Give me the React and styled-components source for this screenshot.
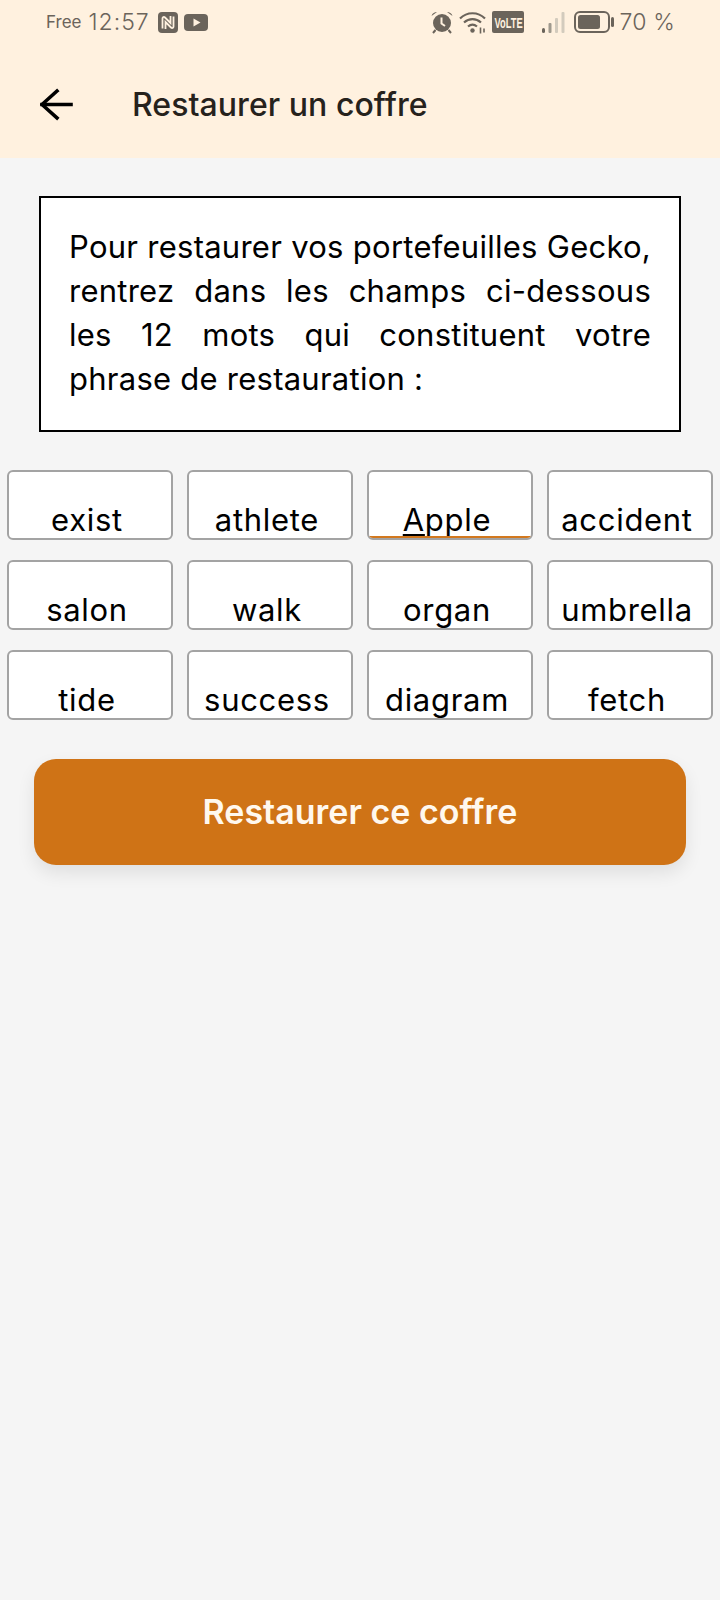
import React from "react";
import styled, { createGlobalStyle } from "styled-components";

const GlobalStyle = createGlobalStyle`
    html, body {
        margin: 0;
        padding: 0;
        background: #f5f5f5;
        font-family: Inter, "Noto Sans", sans-serif;
    }
`;

const Page = styled.div`
    width: 720px;
    height: 1600px;
    display: flex;
    flex-direction: column;
    background: #f5f5f5;
    overflow: hidden;
`;

const Header = styled.header`
    height: 158px;
    display: flex;
    flex-direction: column;
    background: #fff1df;
`;

const StatusBar = styled.div`
    height: 44px;
    padding: 0 45px 0 46px;
    display: flex;
    align-items: center;
    justify-content: space-between;
    color: #6b645b;
`;

const StatusGroup = styled.div`
    display: flex;
    align-items: center;
`;

const Carrier = styled.span`
    font-size: 17px;
    margin-right: 7px;
`;

const Clock = styled.span`
    font-size: 23px;
    font-weight: 300;
    letter-spacing: 1px;
    margin-right: 8px;
`;

const Percent = styled.span`
    font-size: 23px;
    font-weight: 300;
    letter-spacing: 0.2px;
    margin-left: 5px;
`;

const Toolbar = styled.div`
    flex: 1;
    display: flex;
    align-items: center;
    padding: 6px 0 0 40px;
`;

const BackButton = styled.button`
    width: 33px;
    height: 33px;
    padding: 0;
    margin-right: 59px;
    display: flex;
    border: 0;
    background: none;
`;

const Title = styled.h1`
    margin: 0;
    font-size: 32px;
    font-weight: 500;
    letter-spacing: 0.05px;
    color: #26221c;
`;

const Notice = styled.div`
    margin: 38px 39px 0 39px;
    padding: 27px 28px 28px;
    border: 2px solid #000;
    background: #fff;
    box-sizing: border-box;
    height: 236px;
    font-size: 31px;
    font-weight: 400;
    line-height: 44px;
    letter-spacing: 0.25px;
    color: #000;
`;

const NoticeLine = styled.div`
    text-align: ${props => (props.$last ? "left" : "justify")};
    text-align-last: ${props => (props.$last ? "left" : "justify")};
`;

const WordGrid = styled.div`
    margin: 38px 7px 0;
    display: grid;
    grid-template-columns: repeat(4, 166px);
    grid-auto-rows: 70px;
    gap: 20px 14px;
`;

const WordCell = styled.div`
    position: relative;
    box-sizing: border-box;
    display: flex;
    align-items: flex-end;
    justify-content: center;
    padding-right: 6px;
    border: 2px solid #a3a3a3;
    border-radius: 6px;
    background: #fff;
    font-size: 31px;
    font-weight: 400;
    line-height: 36px;
    letter-spacing: 0.7px;
    white-space: nowrap;
    color: #000;
    overflow: hidden;

    ${props => props.$active && `
        &::after {
            content: "";
            position: absolute;
            left: 0;
            right: 0;
            bottom: 0;
            height: 2px;
            background: #d2781e;
        }
    `}
`;

const Underlined = styled.span`
    text-decoration: underline;
    text-decoration-thickness: 2px;
    text-underline-offset: 3px;
`;

const RestoreButton = styled.button`
    margin: 39px 34px 0;
    height: 106px;
    padding: 0 0 2px;
    border: 0;
    border-radius: 22px;
    background: #cf7316;
    box-shadow: 0 8px 18px rgba(0, 0, 0, 0.09);
    color: #fff8ee;
    font-family: inherit;
    font-size: 34px;
    font-weight: 600;
`;

const VolteBadge = styled.span`
    width: 32px;
    height: 22px;
    display: flex;
    align-items: center;
    justify-content: center;
    border-radius: 2px;
    background: #6b645b;
    color: #fff1df;
    margin-right: 18px;
`;

const VolteText = styled.span`
    display: inline-block;
    font-family: "Liberation Sans", sans-serif;
    font-size: 15px;
    font-weight: 700;
    transform: scaleX(0.62);
`;

const noticeLines = [
    "Pour restaurer vos portefeuilles Gecko,",
    "rentrez dans les champs ci-dessous",
    "les 12 mots qui constituent votre",
    "phrase de restauration :",
];

const words = [
    "exist", "athlete", "Apple", "accident",
    "salon", "walk", "organ", "umbrella",
    "tide", "success", "diagram", "fetch",
];

const NfcIcon = () => (
    <svg width="20" height="21" viewBox="0 0 20 21" style={{ marginRight: 6 }}>
        <rect width="20" height="21" rx="4" fill="#6b645b" />
        <path d="M4.5 16.5V6.5C4.5 5 6 4.5 7 5.5L12.5 11V4" fill="none" stroke="#fff1df" strokeWidth="1.8" />
        <path d="M15.5 4.5V14.5C15.5 16 14 16.5 13 15.5L7.5 10V17" fill="none" stroke="#fff1df" strokeWidth="1.8" />
    </svg>
);

const VideoIcon = () => (
    <svg width="24" height="17" viewBox="0 0 24 17">
        <rect width="24" height="17" rx="4" fill="#6b645b" />
        <path d="M9.5 4.5l7 4-7 4z" fill="#fff1df" />
    </svg>
);

const AlarmIcon = () => (
    <svg width="22" height="23" viewBox="0 0 22 23" style={{ marginRight: 6 }}>
        <circle cx="11" cy="12" r="9" fill="#6b645b" />
        <path d="M0.5 5C1.5 2 3.5 1 6 1zM21.5 5C20.5 2 18.5 1 16 1z" fill="#6b645b" />
        <path d="M4.5 19l-2.5 3M17.5 19l2.5 3" stroke="#6b645b" strokeWidth="2" />
        <path d="M10.5 6.5v6l3.5 2.500" fill="none" stroke="#fff1df" strokeWidth="2" />
    </svg>
);

const WifiIcon = () => (
    <svg width="28" height="24" viewBox="0 0 28 24" style={{ marginRight: 5 }}>
        <g fill="none" stroke="#6b645b" strokeWidth="2.2">
            <path d="M1 8.5C8 1.5 19 1.5 26 8.5" />
            <path d="M5 12.5C10 8 17 8 22 12.5" />
            <path d="M9 16.5C12 14 15 14 18 16.5" />
        </g>
        <circle cx="13.5" cy="20.5" r="2.2" fill="#6b645b" />
        <path d="M21.5 17.5v6M25 18.5v4" stroke="#6b645b" strokeWidth="1.6" />
    </svg>
);

const SignalIcon = () => (
    <svg width="23" height="23" viewBox="0 0 23 23" style={{ marginRight: 9 }}>
        <rect x="0" y="17" width="3" height="5" rx="1.5" fill="#6b645b" />
        <rect x="6.5" y="12" width="3" height="10" rx="1" fill="#a09a8e" />
        <rect x="13" y="7" width="3" height="15" rx="1" fill="#d3cbbd" />
        <rect x="19.5" y="1" width="3" height="21" rx="1" fill="#d3cbbd" />
    </svg>
);

const BatteryIcon = () => (
    <svg width="40" height="22" viewBox="0 0 40 22">
        <rect x="1" y="1" width="34" height="20" rx="5" fill="none" stroke="#6b645b" strokeWidth="2" />
        <rect x="4" y="4" width="22" height="14" rx="2.5" fill="#6b645b" />
        <rect x="37" y="6" width="3" height="10" rx="1.5" fill="#6b645b" />
    </svg>
);

const App = () => {
    return (
        <Page>
            <GlobalStyle />
            <Header>
                <StatusBar>
                    <StatusGroup>
                        <Carrier>Free</Carrier>
                        <Clock>12:57</Clock>
                        <NfcIcon />
                        <VideoIcon />
                    </StatusGroup>
                    <StatusGroup>
                        <AlarmIcon />
                        <WifiIcon />
                        <VolteBadge><VolteText>VoLTE</VolteText></VolteBadge>
                        <SignalIcon />
                        <BatteryIcon />
                        <Percent>70 %</Percent>
                    </StatusGroup>
                </StatusBar>
                <Toolbar>
                    <BackButton aria-label="Retour">
                        <svg width="33" height="33" viewBox="0 0 33 33" fill="none" stroke="#000" strokeWidth="3.6" strokeLinecap="square">
                            <path d="M2 16.5h29" />
                            <path d="M17 3L2 16.5 17 30" />
                        </svg>
                    </BackButton>
                    <Title>Restaurer un coffre</Title>
                </Toolbar>
            </Header>
            <Notice>
                {noticeLines.map((line, index) => (
                    <NoticeLine key={line} $last={index === noticeLines.length - 1}>{line}</NoticeLine>
                ))}
            </Notice>
            <WordGrid>
                {words.map((word) => (
                    <WordCell key={word} $active={word === "Apple"}>
                        {word === "Apple" ? <span><Underlined>A</Underlined>pple</span> : word}
                    </WordCell>
                ))}
            </WordGrid>
            <RestoreButton>Restaurer ce coffre</RestoreButton>
        </Page>
    );
};

export default App;
